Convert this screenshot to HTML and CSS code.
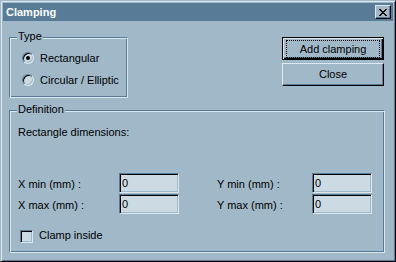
FILE: index.html
```html
<!DOCTYPE html>
<html lang="en">
<head>
    <meta charset="UTF-8">
    <title>Clamping</title>
    <link rel="stylesheet" href="styles.css">
</head>
<body>
    <div class="window">
        <div class="titlebar">
            <span class="title">Clamping</span>
            <button class="close-btn">
                <svg width="8" height="7" viewBox="0 0 8 7" shape-rendering="crispEdges"><path d="M0 0h2v1H0zM6 0h2v1H6zM1 1h2v1H1zM5 1h2v1H5zM2 2h4v1H2zM3 3h2v1H3zM2 4h4v1H2zM1 5h2v1H1zM5 5h2v1H5zM0 6h2v1H0zM6 6h2v1H6z" fill="#000"/></svg>
            </button>
        </div>
        <div class="content">
            <div class="top-row">
                <div class="group type-group">
                    <div class="group-label">Type</div>
                    <label class="option first"><span class="radio checked"></span>Rectangular</label>
                    <label class="option"><span class="radio"></span>Circular / Elliptic</label>
                </div>
                <div class="actions">
                    <button class="btn default"><span class="focus">Add clamping</span></button>
                    <button class="btn">Close</button>
                </div>
            </div>
            <div class="group def-group">
                <div class="group-label">Definition</div>
                <div class="caption">Rectangle dimensions:</div>
                <div class="fields">
                    <div class="field-row">
                        <span class="field-label">X min (mm) :</span>
                        <input type="text" class="field" value="0">
                        <span class="field-label second">Y min (mm) :</span>
                        <input type="text" class="field" value="0">
                    </div>
                    <div class="field-row">
                        <span class="field-label">X max (mm) :</span>
                        <input type="text" class="field" value="0">
                        <span class="field-label second">Y max (mm) :</span>
                        <input type="text" class="field" value="0">
                    </div>
                </div>
                <label class="check-row"><span class="checkbox"></span>Clamp inside</label>
            </div>
        </div>
    </div>
</body>
</html>
```

FILE: styles.css
```css
* {
    box-sizing: border-box;
}
body {
    margin: 0;
    font-family: "Liberation Sans", Arial, sans-serif;
    font-size: 11px;
    line-height: 13px;
    color: #000;
    background: #a0b8c8;
}
.window {
    width: 396px;
    height: 262px;
    padding: 2px;
    background: #a0b8c8;
    border: 1px solid;
    border-color: #a0b8c8 #000 #000 #a0b8c8;
    box-shadow: inset 1px 1px #dce8ee, inset -1px -1px #587c98;
    display: flex;
    flex-direction: column;
}
.titlebar {
    height: 18px;
    background: #587c98;
    color: #fff;
    display: flex;
    align-items: center;
    justify-content: space-between;
    padding: 0 2px 0 3px;
}
.title {
    font-weight: bold;
}
.close-btn {
    width: 16px;
    height: 14px;
    padding: 0;
    background: #a0b8c8;
    border: 1px solid;
    border-color: #dce8ee #000 #000 #dce8ee;
    box-shadow: inset -1px -1px #587c98;
    display: flex;
    align-items: center;
    justify-content: center;
}
.content {
    padding: 16px 8px 0 6px;
    display: flex;
    flex-direction: column;
}
.top-row {
    display: flex;
    justify-content: space-between;
    align-items: flex-start;
}
.group {
    border: 1px solid;
    border-color: #587c98 #dce8ee #dce8ee #587c98;
    box-shadow: inset 1px 1px #dce8ee, inset -1px -1px #587c98;
}
.group-label {
    width: fit-content;
    margin: -8px 0 0 7px;
    padding: 0 1px;
    background: #a0b8c8;
}
.type-group {
    width: 119px;
    height: 61px;
}
.option {
    display: flex;
    align-items: center;
    gap: 6px;
    height: 16px;
    padding-left: 12px;
    margin-top: 6px;
}
.option.first {
    margin-top: 7px;
}
.radio {
    width: 12px;
    height: 12px;
    border-radius: 50%;
    border: 1px solid;
    border-color: #587c98 #dce8ee #dce8ee #587c98;
    box-shadow: inset 1px 1px #000, inset -1px -1px #a0b8c8;
    background: #ccdbe3;
    display: flex;
    align-items: center;
    justify-content: center;
}
.radio.checked::after {
    content: "";
    width: 4px;
    height: 4px;
    border-radius: 50%;
    background: #000;
}
.actions {
    width: 102px;
    margin-right: 1px;
    display: flex;
    flex-direction: column;
    gap: 3px;
}
.btn {
    height: 23px;
    padding: 0;
    font: inherit;
    color: #000;
    background: #a0b8c8;
    border: 1px solid;
    border-color: #dce8ee #000 #000 #dce8ee;
    box-shadow: inset -1px -1px #587c98;
}
.btn.default {
    border-color: #000;
    box-shadow: inset 1px 1px #dce8ee, inset -1px -1px #000, inset -2px -2px #587c98;
}
.focus {
    display: block;
    height: 18px;
    margin: 0 3px;
    line-height: 16px;
    border: 1px dotted #000;
}
.def-group {
    margin-top: 12px;
    height: 143px;
}
.caption {
    margin: 10px 0 0 8px;
}
.fields {
    margin-top: 34px;
    padding-left: 8px;
}
.field-row {
    display: flex;
    align-items: flex-end;
}
.field-row + .field-row {
    margin-top: 1px;
}
.field-label {
    width: 101px;
    padding-bottom: 2px;
}
.field-label.second {
    width: 95px;
    margin-left: 38px;
}
.field {
    width: 60px;
    height: 20px;
    padding: 0 0 0 2px;
    font: inherit;
    color: #000;
    background: #ccdbe3;
    border: 1px solid;
    border-color: #587c98 #dce8ee #dce8ee #587c98;
    box-shadow: inset 1px 1px #000, inset -1px -1px #a0b8c8;
    outline: none;
}
.check-row {
    display: flex;
    align-items: flex-start;
    gap: 6px;
    margin-top: 15px;
    padding-left: 10px;
}
.checkbox {
    width: 13px;
    height: 13px;
    margin-top: 1px;
    border: 1px solid;
    border-color: #587c98 #dce8ee #dce8ee #587c98;
    box-shadow: inset 1px 1px #000, inset -1px -1px #a0b8c8;
    background: #ccdbe3;
}
```
